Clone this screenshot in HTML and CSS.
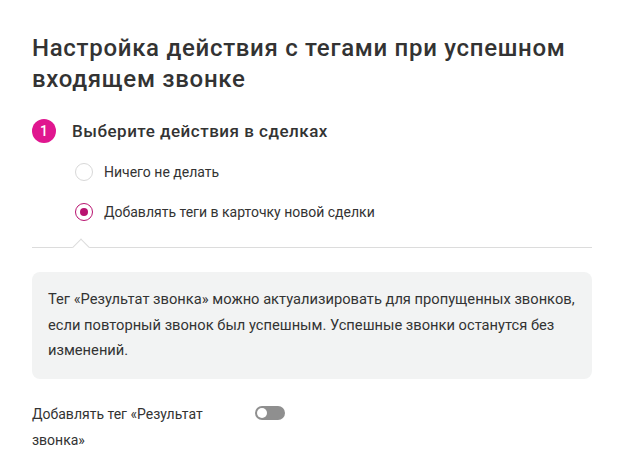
FILE: index.html
```html
<!DOCTYPE html>
<html lang="ru">
<head>
<meta charset="utf-8">
<link rel="stylesheet" href="styles.css">
</head>
<body>
<div class="page">
  <h1 class="title">Настройка действия с тегами при успешном входящем звонке</h1>
  <div class="step">
    <span class="badge">1</span>
    <span class="step-title">Выберите действия в сделках</span>
  </div>
  <div class="options">
    <label class="option"><span class="radio"></span><span>Ничего не делать</span></label>
    <label class="option"><span class="radio checked"></span><span>Добавлять теги в карточку новой сделки</span></label>
  </div>
  <div class="divider"><span class="notch"></span></div>
  <div class="info">Тег «Результат звонка» можно актуализировать для пропущенных звонков, если повторный звонок был успешным. Успешные звонки останутся без изменений.</div>
  <div class="toggle-row">
    <span class="toggle-label">Добавлять тег «Результат звонка»</span>
    <span class="toggle"><span class="knob"></span></span>
  </div>
</div>
</body>
</html>
```
FILE: styles.css
```css
* { box-sizing: border-box; }
html, body { margin: 0; background: #fff; }
body { font-family: Roboto, "Noto Sans", sans-serif; color: #333; }
.page { padding: 33px 32px 0 32px; width: 624px; }
.title { margin: 0; font-size: 24px; line-height: 31px; font-weight: 500; letter-spacing: 0.7px; color: #333; width: 560px; }
.step { display: flex; align-items: center; gap: 16px; margin-top: 24px; height: 24px; }
.badge { width: 24px; height: 24px; border-radius: 50%; background: #e0168f; color: #fff; font-size: 14px; font-weight: 500; display: flex; align-items: center; justify-content: center; }
.step-title { font-size: 17px; font-weight: 500; letter-spacing: 0.5px; color: #333; }
.options { display: flex; flex-direction: column; padding-left: 43px; margin-top: 9px; }
.option { display: flex; align-items: center; gap: 11px; height: 40px; font-size: 14px; color: #333; }
.radio { width: 18px; height: 18px; border-radius: 50%; border: 1px solid #d8d8d8; background: #fff; position: relative; flex: none; }
.radio.checked { border: 1.5px solid #b8126f; }
.radio.checked::after { content: ""; position: absolute; left: 50%; top: 50%; width: 8px; height: 8px; margin: -4px 0 0 -4px; border-radius: 50%; background: #b8126f; }
.divider { position: relative; height: 1px; background: #dcdcdc; margin-top: 15px; }
.notch { position: absolute; left: 43px; top: -6px; width: 12px; height: 12px; background: #fff; border-top: 1px solid #dcdcdc; border-left: 1px solid #dcdcdc; transform: rotate(45deg); }
.info { margin-top: 24px; background: #f2f3f3; border-radius: 8px; padding: 15px 16px 15px 16px; font-size: 14.7px; line-height: 25.5px; color: #333; }
.toggle-row { display: grid; grid-template-columns: 207px auto; column-gap: 16px; margin-top: 22px; align-items: start; }
.toggle-label { font-size: 14px; line-height: 26px; }
.toggle { margin-top: 5px; width: 30px; height: 14px; border-radius: 7px; background: #8f8f8f; position: relative; }
.knob { position: absolute; left: 2px; top: 2px; width: 10px; height: 10px; border-radius: 50%; background: #fff; }
```
